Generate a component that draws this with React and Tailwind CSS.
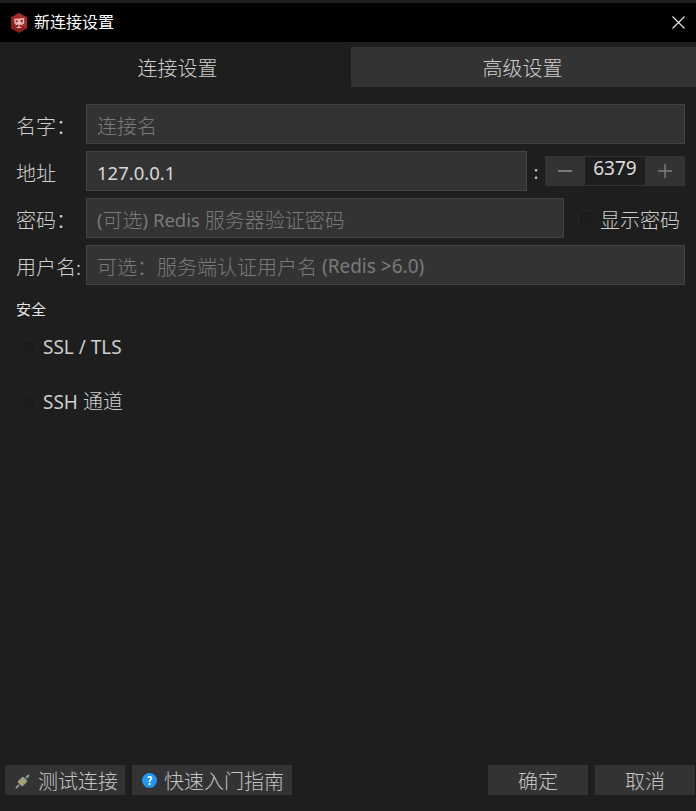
import React from "react";

const font = { fontFamily: '"Noto Sans CJK SC", "Noto Sans", sans-serif' };

// latin text is set a bit smaller than the CJK around it
function L({ children }) {
  return <span style={{ fontFamily: '"Noto Sans", sans-serif' }} className="text-[19px] font-normal">{children}</span>;
}

function F({ children }) {
  return <span style={{ fontFamily: '"Noto Sans", sans-serif' }} className="text-[18.5px] font-normal">{children}</span>;
}

function Field({ children, value, className = "flex-1" }) {
  return (
    <div
      className={`${className} h-10 flex items-center px-[10px] bg-[#333333] border border-[#434343] text-[20px] whitespace-pre pt-[3px] font-light ${
        value ? "text-[#d8d8d8]" : "text-[#7a7a7a]"
      }`}
    >
      {children}
    </div>
  );
}

function Label({ children }) {
  return <div className="w-[86px] pl-4 pt-[3px] text-[20px] font-light text-[#cfcfcf] whitespace-nowrap">{children}</div>;
}

function Logo() {
  return (
    <svg width="18" height="20" viewBox="0 0 18 20">
      <polygon points="9,0 17,4.5 17,15.5 9,20 1,15.5 1,4.5" fill="#8e1f1c" />
      <polygon points="9,0 17,4.5 17,15.5 9,11 1,4.5" fill="#a82d28" />
      <path d="M5 6.5h3.5v3.5H5zM10 6h3.5v4H10z" fill="none" stroke="#e9c4c0" strokeWidth="1.3" />
      <path d="M5.5 12l3.5-2 3.5 2M9 10v4M6.5 14.5h5" fill="none" stroke="#e9c4c0" strokeWidth="1.2" />
    </svg>
  );
}

function Plug() {
  return (
    <svg width="15" height="15" viewBox="0 0 15 15">
      <path d="M1 14l3-3M14 1l-3 3" stroke="#8b9a9d" strokeWidth="2" />
      <rect x="4" y="3.5" width="7" height="8" rx="1.5" transform="rotate(45 7.5 7.5)" fill="#8b9a9d" />
      <path d="M4.5 7.5l3 3M6.5 5l3 3" stroke="#d9a520" strokeWidth="1.5" />
    </svg>
  );
}

function FooterButton({ children, className }) {
  return (
    <div className={`${className} h-[30px] flex items-center bg-[#333333] text-[20px] font-light text-[#c4c4c4] pt-[2px]`}>
      {children}
    </div>
  );
}

export default function App() {
  return (
    <div style={font} className="w-[696px] h-[811px] flex flex-col bg-[#1e1e1e] overflow-hidden pt-[3px]">
      {/* title bar */}
      <div className="h-[39px] shrink-0 bg-black flex items-center pl-[10px] pr-[11px] gap-[6px]">
        <Logo />
        <span className="flex-1 text-[16px] text-white -mt-[3px]">新连接设置</span>
        <svg width="13" height="13" viewBox="0 0 13 13">
          <path d="M.5.5l12 12M12.5.5l-12 12" stroke="#e8e8e8" strokeWidth="1.1" />
        </svg>
      </div>

      {/* tabs */}
      <div className="flex h-10 mt-[5px] shrink-0 text-[20px] font-light text-[#cfcfcf]">
        <div className="w-[351px] flex items-center justify-center pt-[2px] pl-[4px]">连接设置</div>
        <div className="flex-1 flex items-center justify-center bg-[#333333] pt-[2px] pr-[2px]">高级设置</div>
      </div>

      {/* form */}
      <div className="flex flex-col gap-[7px] mt-[17px] pr-[11px]">
        <div className="flex items-center">
          <Label>名字：</Label>
          <Field>连接名</Field>
        </div>
        <div className="flex items-center">
          <Label>地址</Label>
          <Field value className="w-[441px]"><F>127.0.0.1</F></Field>
          <span className="w-[18px] text-center text-[18px] text-[#c8c8c8]">:</span>
          <div className="flex-1 h-[30px] flex items-center bg-[#333333]">
            <div className="w-10 flex justify-center">
              <svg width="14" height="14" viewBox="0 0 14 14">
                <path d="M0 7h14" stroke="#9a9a9a" strokeWidth="1.4" />
              </svg>
            </div>
            <div style={{ fontFamily: '"Noto Sans", sans-serif' }} className="w-[60px] h-7 bg-[#1e1e1e] text-[19px] leading-[22px] text-center text-[#dcdcdc]">6379</div>
            <div className="flex-1 flex justify-center">
              <svg width="14" height="14" viewBox="0 0 14 14">
                <path d="M0 7h14M7 0v14" stroke="#7d7d7d" strokeWidth="1.4" />
              </svg>
            </div>
          </div>
        </div>
        <div className="flex items-center">
          <Label>密码：</Label>
          <Field className="w-[478px]"><F>(</F>可选<F>) Redis </F>服务器验证密码</Field>
          <div className="flex items-center gap-[6px] ml-[14px] text-[20px] font-light text-[#cfcfcf] whitespace-nowrap">
            <div className="w-4 h-4 rounded-[3px] border border-[#252525] bg-[#1c1c1c]" />
            <span className="pt-[3px]">显示密码</span>
          </div>
        </div>
        <div className="flex items-center">
          <Label>用户名:</Label>
          <Field>可选：服务端认证用户名<L> (Redis &gt;6.0)</L></Field>
        </div>
      </div>

      {/* security */}
      <div className="pl-4 mt-[14px] text-[15px] leading-[20px] text-[#e6e6e6]">安全</div>
      <div className="flex flex-col gap-[26px] mt-[14px] pl-[21px] text-[20px] font-light leading-[28px] text-[#cfcfcf]">
        <div className="flex items-center gap-[6px]">
          <div className="w-4 h-4 rounded-full border border-[#252525] bg-[#1c1c1c]" />
          <L>SSL / TLS</L>
        </div>
        <div className="flex items-center gap-[6px]">
          <div className="w-4 h-4 rounded-full border border-[#252525] bg-[#1c1c1c]" />
          <span><L>SSH </L>通道</span>
        </div>
      </div>

      {/* footer */}
      <div className="mt-auto mb-[16px] flex items-center pl-[5px] pr-px">
        <FooterButton className="w-[120px] pl-[10px] gap-2">
          <Plug />
          <span>测试连接</span>
        </FooterButton>
        <FooterButton className="w-40 ml-[7px] pl-[10px] gap-[7px]">
          <span className="w-[15px] h-[15px] rounded-full bg-[#2196f3] text-white text-[11px] font-bold flex items-center justify-center -mt-[2px]">?</span>
          <span>快速入门指南</span>
        </FooterButton>
        <FooterButton className="w-[100px] ml-auto justify-center">确定</FooterButton>
        <FooterButton className="w-[100px] ml-[7px] justify-center">取消</FooterButton>
      </div>
    </div>
  );
}
